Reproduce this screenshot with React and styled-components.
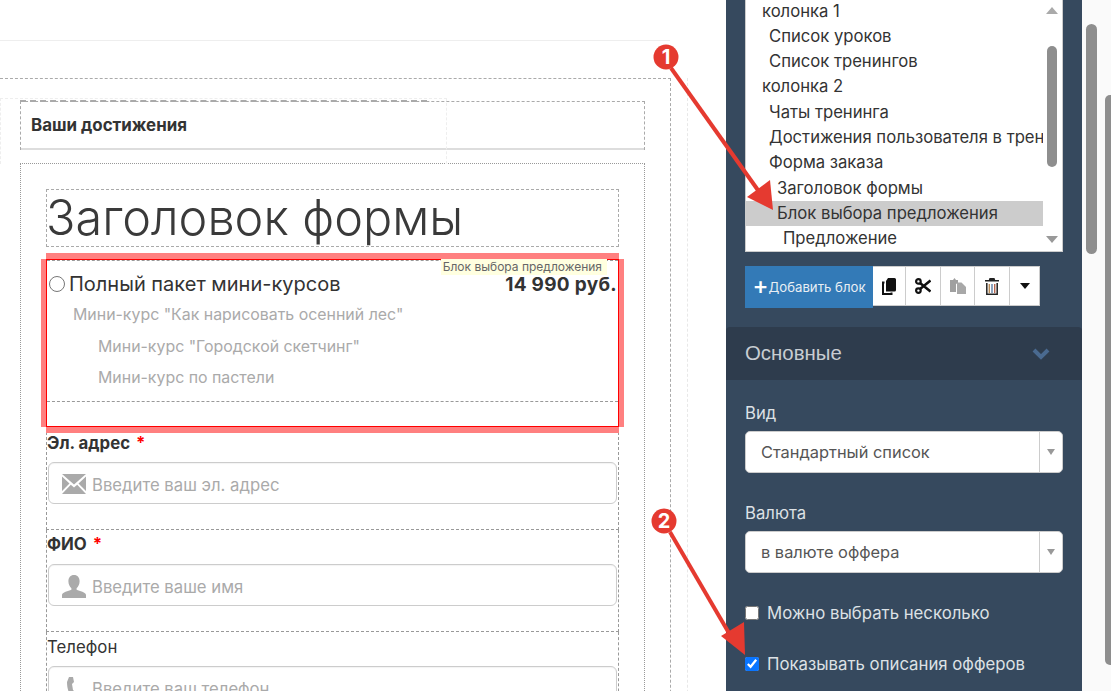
import React from "react";
import styled, { createGlobalStyle } from "styled-components";

const Global = createGlobalStyle`
  html, body { margin: 0; padding: 0; background: #fff; }
  * { box-sizing: border-box; }
  body { font-family: Inter, "Noto Sans", sans-serif; color: #333; }
`;
const Page = styled.div`
  position: relative; width: 1111px; height: 691px; overflow: hidden; display: flex;
`;
const Canvas = styled.main`
  width: 726px; height: 691px; overflow: hidden; flex: none; background: #fff;
`;
const TopRule = styled.div`
  width: 670px; height: 1px; margin-top: 40px; background: #eee;
`;
const OuterFrame = styled.div`
  width: 688px; margin-top: 37px; height: 700px; border-right: 1px dashed #e8e8e8;
`;
const PageBlock = styled.div`
  width: 671px; height: 700px; padding: 22px 0 0 20px;
  border-top: 1px dashed #aaa; border-right: 1px dashed #aaa;
`;
const Achievements = styled.section`
  position: relative; width: 625px; height: 49px; display: flex; align-items: center; padding: 0 0 3px 10px;
  border: 1px dashed #aaa; border-bottom: 0; box-shadow: inset 0 -2px 0 #ddd;
  font-size: 16.9px; font-weight: 700; color: #333;
  &::before {
    content: ""; position: absolute; left: -21px; top: -4px; width: 445px; height: 65px;
    border: 1px dashed #eee; border-bottom: 0; pointer-events: none;
  }
  &::after {
    content: ""; position: absolute; left: -1px; top: -2px; width: 407px; height: 2px;
    border-top: 2px dashed #aaa;
  }
`;
const OrderForm = styled.section`
  width: 625px; height: 600px; margin-top: 13px; padding: 25px 25px 0 25px;
  border: 1px dotted #999;
`;
const TitleBlock = styled.div`
  height: 58px; width: 573px; border: 1px dashed #aaa;
`;
const Title = styled.h1`
  margin: 0 0 0 -1px; font-size: 48.6px; line-height: 56px; font-weight: 300; color: #3a3a3a; white-space: nowrap;
`;
const OfferBlock = styled.div`
  position: relative; width: 573px; height: 168px; margin-top: 12px;
  border: 1px solid #f00;
  box-shadow: -5px 0 0 #ff8080, 5px 0 0 #ff8080, 0 -6px 0 #ff8080, 0 6px 0 #ff8080;
`;
const OfferInner = styled.div`
  height: 142px; border-top: 1px dashed #999; border-bottom: 1px dashed #999; padding: 8px 1px 0 1px;
`;
const BlockTip = styled.span`
  position: absolute; right: 11px; top: -1px; height: 16px; line-height: 15px; padding: 0 5px 0 2px;
  background: #ffffe0; color: #666; font-size: 12px; white-space: nowrap;
`;
const OfferHead = styled.div`
  display: flex; align-items: center; height: 30px; font-size: 20px; color: #333; white-space: nowrap;
`;
const Radio = styled.span`
  width: 16px; height: 16px; flex: none; border: 1.5px solid #777; border-radius: 50%; margin: 0 4px 0 1px;
`;
const Price = styled.b`
  margin-left: auto; font-weight: 700; font-size: 19px; letter-spacing: .3px;
`;
const SubItem = styled.div`
  font-size: 15.9px; line-height: 31.5px; color: #aaa; padding-left: ${p => p.$indent}px; white-space: nowrap;
`;
const FieldRow = styled.div`
  width: 573px; height: ${p => p.$h}px; padding: ${p => p.$pt}px 1px 0;
  border-left: 1px dashed #999; border-right: 1px dashed #999;
  border-bottom: ${p => p.$last ? "0" : "1px dashed #999"};
`;
const FieldLabel = styled.div`
  height: 22px; line-height: 22px; font-size: 16.8px; font-weight: ${p => p.$bold ? 700 : 400}; color: #333;
  margin-left: -1px;
  & i { color: #f00; font-style: normal; margin-left: 2px; }
`;
const InputBox = styled.div`
  display: flex; align-items: center; height: 42px; margin-top: ${p => p.$mt}px; padding: 3px 0 0 13px; gap: 6px;
  border: 1px solid #ccc; border-radius: 6px; color: #aaa; font-size: 16.7px; background: #fff;
  white-space: nowrap;
  box-shadow: inset 0 1px 1px rgba(0,0,0,.05);
  & svg { flex: none; margin-top: -1px; }
`;
const Sidebar = styled.aside`
  width: 356px; height: 691px; flex: none; background: #36495e;
`;
const TreeBox = styled.div`
  position: relative; width: 318px; height: 252px; margin-left: 19px; background: #fff;
  border: 1px solid #ccc; border-top: 0; display: flex; overflow: hidden;
`;
const TreeRows = styled.div`
  width: 297px; overflow: hidden; margin-top: -1.5px;
`;
const TreeRow = styled.div`
  height: 25.3px; line-height: 25.3px; font-size: 16.65px; color: #333; white-space: nowrap;
  padding-left: ${p => p.$indent}px; background: ${p => p.$active ? "#ccc" : "transparent"};
`;
const ListBar = styled.div`
  position: relative; width: 19px; background: #fff;
  & > i { position: absolute; left: 4px; top: 46px; width: 10px; height: 121px; background: #8e8e8e; border-radius: 5px; }
`;
const ScrollArrow = styled.span`
  position: absolute; left: 3px; top: ${p => p.$top}px; width: 0; height: 0;
  border-left: 6.5px solid transparent; border-right: 6.5px solid transparent;
  ${p => p.$up ? "border-bottom: 7px solid #aaa;" : "border-top: 7px solid #999;"}
`;
const Toolbar = styled.div`
  display: flex; align-items: flex-start; margin: 14px 0 0 19px; height: 42px;
`;
const AddButton = styled.button`
  width: 128px; height: 42px; background: #337ab7; border: 0; padding: 0; color: #e8eef4; font: 400 13.2px Inter, sans-serif;
  display: flex; align-items: center; justify-content: center; white-space: nowrap;
  & b { font-size: 24px; font-weight: 500; color: #fff; line-height: 1; margin-top: -2px; }
`;
const ToolButton = styled.button`
  width: ${p => p.$w}px; height: 40px; background: #fff; border: 1px solid #ccc; border-left: 0; padding: 0;
  display: flex; align-items: center; justify-content: center;
`;
const SectionHead = styled.div`
  display: flex; align-items: center; justify-content: space-between; height: 53px; margin-top: 19px;
  padding: 0 32px 0 19px; background: #2e3c4d; color: #c8cdd2; font: 400 20.4px "Liberation Sans", sans-serif;
  border-radius: 4px 4px 0 0;
`;
const SectionTitle = styled.span`
  margin-top: -1px;
`;
const FieldGroup = styled.div`
  padding: 0 19px; margin-top: ${p => p.$mt}px;
`;
const SideLabel = styled.div`
  font-size: 16.7px; line-height: 22px; color: #dde1e5;
`;
const SelectBox = styled.div`
  display: flex; height: 42px; width: 318px; margin-top: 7px; background: #fff; border: 1px solid #ccc; border-radius: 5px;
  color: #555; font-size: 16.4px; align-items: stretch;
`;
const SelectText = styled.div`
  flex: 1; padding-left: 15px; display: flex; align-items: center;
`;
const SelectCaret = styled.div`
  width: 23px; border-left: 1px solid #ccc; display: flex; align-items: center; justify-content: center;
  &::after { content: ""; border-left: 4px solid transparent; border-right: 4px solid transparent; border-top: 6px solid #999; }
`;
const CheckRow = styled.label`
  display: flex; align-items: center; gap: 8px; height: 22px; margin-top: ${p => p.$mt}px; padding-left: 19px;
  color: #dde1e5; font-size: 16.75px; white-space: nowrap;
  & input { width: 14px; height: 14px; margin: 0; accent-color: #0a75ff; flex: none; }
`;
const Gutter = styled.div`
  flex: 1; position: relative; background: #fafafa;
`;
const GutterThumb = styled.div`
  position: absolute; left: ${p => p.$l}px; top: ${p => p.$t}px; width: ${p => p.$w}px; height: ${p => p.$h}px;
  background: #8e8e8e; border-radius: 6px;
`;
const Annotations = styled.svg`
  position: absolute; left: 0; top: 0; width: 1111px; height: 691px; pointer-events: none;
`;

const CopyIcon = () => (
  <svg width="14" height="17" viewBox="0 0 14 17"><path fill="#111" d="M6 0h6.500a1.500 1.500 0 0 1 1.500 1.500V12a1.500 1.500 0 0 1-1.500 1.500H4V3z" /><path fill="none" stroke="#111" strokeWidth="2" d="M2.500 4.500H1V16h8.500v-1.500" /></svg>
);
const CutIcon = () => (
  <svg width="16" height="16" viewBox="0 0 16 16"><g fill="none" stroke="#111" strokeWidth="2.200"><circle cx="3.400" cy="3.400" r="2.300" /><circle cx="3.400" cy="12.600" r="2.300" /></g><path stroke="#111" strokeWidth="2.600" d="M5 5l10.500 8.500M5 11L15.500 2.500" /></svg>
);
const PasteIcon = () => (
  <svg width="16" height="16" viewBox="0 0 16 16"><path fill="#a0a0a0" d="M0 2h3l1.500-2L6 2h2v3l-2 1v8H0z" /><path fill="#a8a8a8" d="M7 4.500h4.500L16 9v7H7z" /></svg>
);
const TrashIcon = () => (
  <svg width="14" height="17" viewBox="0 0 14 17"><path fill="#222" d="M4.500 0h5l.7 2H14v1.600H0V2h3.800z" /><path fill="none" stroke="#222" strokeWidth="1.500" d="M1.800 5v11.200h10.400V5" /><path fill="#b98a55" d="M3.600 6h1.400v9H3.600z" /><path fill="#5f7fa5" d="M6.300 6h1.400v9H6.300z" /><path fill="#b5654f" d="M9 6h1.400v9H9z" /></svg>
);
const CaretIcon = () => (
  <svg width="10" height="6" viewBox="0 0 10 6"><path fill="#111" d="M0 0h10L5 6z" /></svg>
);
const MailIcon = () => (
  <svg width="24" height="21" viewBox="0 0 24 21"><path fill="#aaa" d="M0 0h24L12 10.500zM0 2.500l7.500 7L0 17zM24 2.500l-7.500 7L24 17zM8.800 10.800L12 13.500l3.200-2.700L24 20H0z" /></svg>
);
const UserIcon = () => (
  <svg width="24" height="23" viewBox="0 0 24 23"><path fill="#aaa" d="M12 0c3.600 0 5.600 2.600 5.600 6.200 0 3-1.400 5.600-3 7v1.600c3 1.200 9.400 2.400 9.400 5.200V23H0v-3c0-2.800 6.400-4 9.400-5.200v-1.600c-1.600-1.400-3-4-3-7C6.400 2.600 8.400 0 12 0z" /></svg>
);
const PhoneIcon = () => (
  <svg width="24" height="23" viewBox="0 0 24 23"><path fill="#aaa" d="M7 0h4l1 5-2 2 1 6 2 2 3 1 1 4-3 3c-6-2-9-10-9-18z" /></svg>
);
const ChevronIcon = () => (
  <svg width="18" height="12" viewBox="0 0 18 12"><path fill="none" stroke="#4a6a90" strokeWidth="4" d="M2 2l7 7 7-7" /></svg>
);

const rows = [
  ["колонка 1", 16], ["Список уроков", 23], ["Список тренингов", 23], ["колонка 2", 16], ["Чаты тренинга", 23],
  ["Достижения пользователя в тренинге", 23], ["Форма заказа", 23], ["Заголовок формы", 31],
  ["Блок выбора предложения", 31, true], ["Предложение", 37],
];

export default function App() {
  return (
    <Page>
      <Global />
      <Canvas>
        <TopRule />
        <OuterFrame>
          <PageBlock>
            <Achievements>Ваши достижения</Achievements>
            <OrderForm>
              <TitleBlock><Title>Заголовок формы</Title></TitleBlock>
              <OfferBlock>
                <OfferInner>
                  <OfferHead><Radio />Полный пакет мини-курсов<Price>14 990 руб.</Price></OfferHead>
                  <SubItem $indent={25}>Мини-курс "Как нарисовать осенний лес"</SubItem>
                  <SubItem $indent={50}>Мини-курс "Городской скетчинг"</SubItem>
                  <SubItem $indent={50}>Мини-курс по пастели</SubItem>
                </OfferInner>
                <BlockTip>Блок выбора предложения</BlockTip>
              </OfferBlock>
              <FieldRow $h={103} $pt={5}>
                <FieldLabel $bold>Эл. адрес <i>*</i></FieldLabel>
                <InputBox $mt={8}><MailIcon />Введите ваш эл. адрес</InputBox>
              </FieldRow>
              <FieldRow $h={102} $pt={3}>
                <FieldLabel $bold>ФИО <i>*</i></FieldLabel>
                <InputBox $mt={9}><UserIcon />Введите ваше имя</InputBox>
              </FieldRow>
              <FieldRow $h={80} $pt={4} $last>
                <FieldLabel>Телефон</FieldLabel>
                <InputBox $mt={8}><PhoneIcon />Введите ваш телефон</InputBox>
              </FieldRow>
            </OrderForm>
          </PageBlock>
        </OuterFrame>
      </Canvas>
      <Sidebar>
        <TreeBox>
          <TreeRows>
            {rows.map(([t, i, a]) => <TreeRow key={t} $indent={i} $active={a}>{t}</TreeRow>)}
          </TreeRows>
          <ListBar>
            <ScrollArrow $up $top={7} />
            <i />
            <ScrollArrow $top={236} />
          </ListBar>
        </TreeBox>
        <Toolbar>
          <AddButton><b>+</b>Добавить блок</AddButton>
          <ToolButton $w={33}><CopyIcon /></ToolButton>
          <ToolButton $w={35}><CutIcon /></ToolButton>
          <ToolButton $w={34}><PasteIcon /></ToolButton>
          <ToolButton $w={35}><TrashIcon /></ToolButton>
          <ToolButton $w={30}><CaretIcon /></ToolButton>
        </Toolbar>
        <SectionHead><SectionTitle>Основные</SectionTitle><ChevronIcon /></SectionHead>
        <FieldGroup $mt={22}>
          <SideLabel>Вид</SideLabel>
          <SelectBox><SelectText>Стандартный список</SelectText><SelectCaret /></SelectBox>
        </FieldGroup>
        <FieldGroup $mt={29}>
          <SideLabel>Валюта</SideLabel>
          <SelectBox><SelectText>в валюте оффера</SelectText><SelectCaret /></SelectBox>
        </FieldGroup>
        <CheckRow $mt={29}><input type="checkbox" readOnly />Можно выбрать несколько</CheckRow>
        <CheckRow $mt={29}><input type="checkbox" checked readOnly />Показывать описания офферов</CheckRow>
      </Sidebar>
      <Gutter>
        <GutterThumb $l={4} $t={24} $w={11} $h={230} />
        <GutterThumb $l={23} $t={95} $w={10} $h={570} />
      </Gutter>
      <Annotations viewBox="0 0 1111 691">
        <path stroke="#e53a30" strokeWidth="4" d="M671 68L760 193" />
        <path fill="#e53a30" d="M773 210L747 197L770 180z" />
        <circle cx="666" cy="57" r="12.500" fill="#e53a30" />
        <text x="666" y="64" textAnchor="middle" fill="#fff" fontSize="20" fontWeight="700" fontFamily="Inter, sans-serif">1</text>
        <path stroke="#e53a30" strokeWidth="4" d="M670 532L733 640" />
        <path fill="#e53a30" d="M745 655L721 636L744 622z" />
        <circle cx="664" cy="521" r="12.500" fill="#e53a30" />
        <text x="664" y="528" textAnchor="middle" fill="#fff" fontSize="20" fontWeight="700" fontFamily="Inter, sans-serif">2</text>
      </Annotations>
    </Page>
  );
}
